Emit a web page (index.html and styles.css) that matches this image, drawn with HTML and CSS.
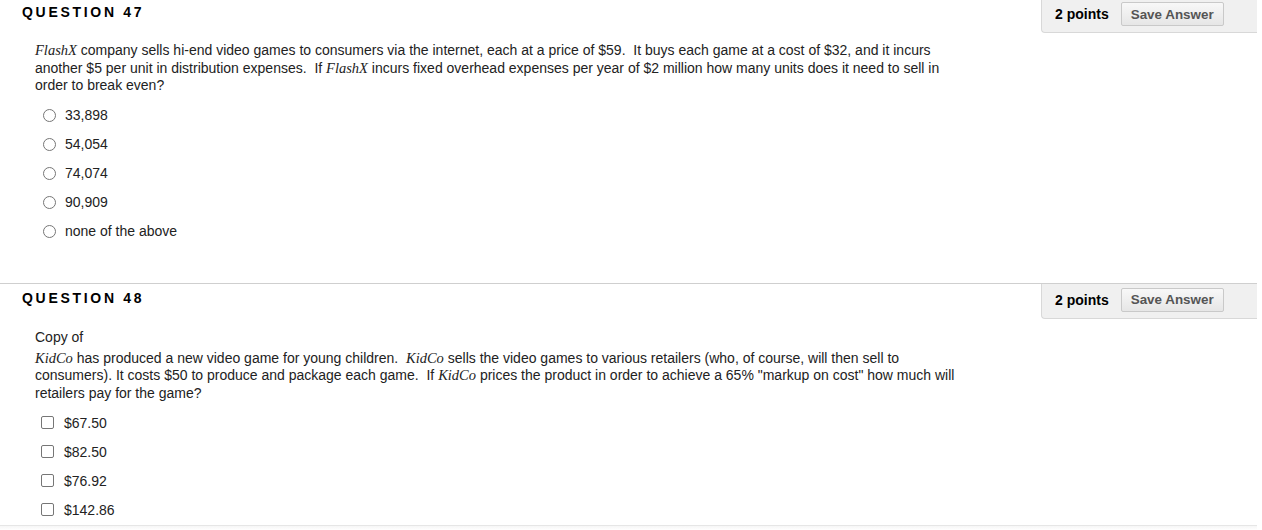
FILE: index.html
```html
<!DOCTYPE html>
<html>
<head>
<meta charset="utf-8">
<link rel="stylesheet" href="styles.css">
</head>
<body>
<div class="page">
  <div class="question first">
    <div class="q-header">
      <h3 class="q-title">QUESTION 47</h3>
      <div class="points-box">
        <span class="points">2 points</span>
        <button class="save-btn">Save Answer</button>
      </div>
    </div>
    <div class="q-body">
      <p class="q-text"><i class="em">FlashX</i> company sells hi-end video games to consumers via the internet, each at a price of $59.&nbsp; It buys each game at a cost of $32, and it incurs another $5 per unit in distribution expenses.&nbsp; If <i class="em">FlashX</i> incurs fixed overhead expenses per year of $2 million how many units does it need to sell in order to break even?</p>
      <ul class="options">
        <li class="option"><input type="radio" class="radio" name="q47"><span>33,898</span></li>
        <li class="option"><input type="radio" class="radio" name="q47"><span>54,054</span></li>
        <li class="option"><input type="radio" class="radio" name="q47"><span>74,074</span></li>
        <li class="option"><input type="radio" class="radio" name="q47"><span>90,909</span></li>
        <li class="option"><input type="radio" class="radio" name="q47"><span>none of the above</span></li>
      </ul>
    </div>
  </div>
  <div class="question second">
    <div class="q-header">
      <h3 class="q-title">QUESTION 48</h3>
      <div class="points-box">
        <span class="points">2 points</span>
        <button class="save-btn">Save Answer</button>
      </div>
    </div>
    <div class="q-body">
      <p class="q-copy">Copy of</p>
      <p class="q-text"><i class="em">KidCo</i> has produced a new video game for young children.&nbsp; <i class="em">KidCo</i> sells the video games to various retailers (who, of course, will then sell to consumers). It costs $50 to produce and package each game.&nbsp; If <i class="em">KidCo</i> prices the product in order to achieve a 65% "markup on cost" how much will retailers pay for the game?</p>
      <ul class="options">
        <li class="option"><input type="checkbox" class="check"><span>$67.50</span></li>
        <li class="option"><input type="checkbox" class="check"><span>$82.50</span></li>
        <li class="option"><input type="checkbox" class="check"><span>$76.92</span></li>
        <li class="option"><input type="checkbox" class="check"><span>$142.86</span></li>
      </ul>
    </div>
  </div>
  <div class="next-block"></div>
</div>
</body>
</html>
```
FILE: styles.css
```css
html, body {
  margin: 0;
  padding: 0;
  background: #fff;
}
body {
  font-family: "Liberation Sans", Arial, sans-serif;
  font-size: 14px;
  color: #222;
  overflow: hidden;
}
.page {
  width: 1257px;
  margin-top: -3px;
}
.question {
  border-top: 1px solid #cfcfcf;
}
.question.first {
  padding-bottom: 37px;
}
.question.second {
  padding-bottom: 1px;
}
.q-header {
  display: flex;
  justify-content: space-between;
  align-items: flex-start;
}
.q-title {
  margin: 6px 0 0 22px;
  font-size: 14px;
  line-height: 17px;
  font-weight: bold;
  letter-spacing: 2.7px;
  color: #000;
}
.points-box {
  box-sizing: border-box;
  width: 216px;
  height: 35px;
  background: #f0f0f0;
  border: 1px solid #d8d8d8;
  border-top: none;
  border-right: none;
  border-bottom-left-radius: 4px;
  display: flex;
  align-items: flex-start;
  padding: 4px 0 0 13px;
  gap: 12px;
}
.points {
  font-weight: bold;
  font-size: 14px;
  line-height: 24px;
  color: #000;
}
.save-btn {
  box-sizing: border-box;
  width: 103px;
  height: 24px;
  padding: 0;
  border: 1px solid #c9c9c9;
  border-radius: 2px;
  background: linear-gradient(#f8f8f8, #e6e6e6);
  font-family: "Liberation Sans", Arial, sans-serif;
  font-size: 13.4px;
  font-weight: bold;
  color: #555;
}
.q-body {
  margin: 9px 0 0 35px;
  width: 930px;
}
.q-copy {
  margin: 0 0 3.5px 0;
  padding-top: 1px;
  line-height: 17.5px;
}
.q-text {
  margin: 0;
  line-height: 17.5px;
}
.em {
  font-family: "Liberation Serif", "Times New Roman", serif;
  font-size: 14.5px;
}
.options {
  list-style: none;
  margin: 6px 0 0 0;
  padding: 0;
}
.option {
  display: flex;
  align-items: center;
  height: 29px;
}
.radio, .check {
  appearance: none;
  -webkit-appearance: none;
  box-sizing: border-box;
  width: 13px;
  height: 13px;
  margin: 0;
  background: #fff;
  border: 1px solid #767676;
  flex: none;
}
.radio {
  border-radius: 50%;
  margin-left: 8px;
  margin-right: 9px;
}
.check {
  border-radius: 2px;
  margin-left: 6px;
  margin-right: 10px;
}
.next-block {
  height: 20px;
  border-top: 1px solid #e6e6e6;
  background: linear-gradient(#f6f6f6, #fff 4px);
}
```
